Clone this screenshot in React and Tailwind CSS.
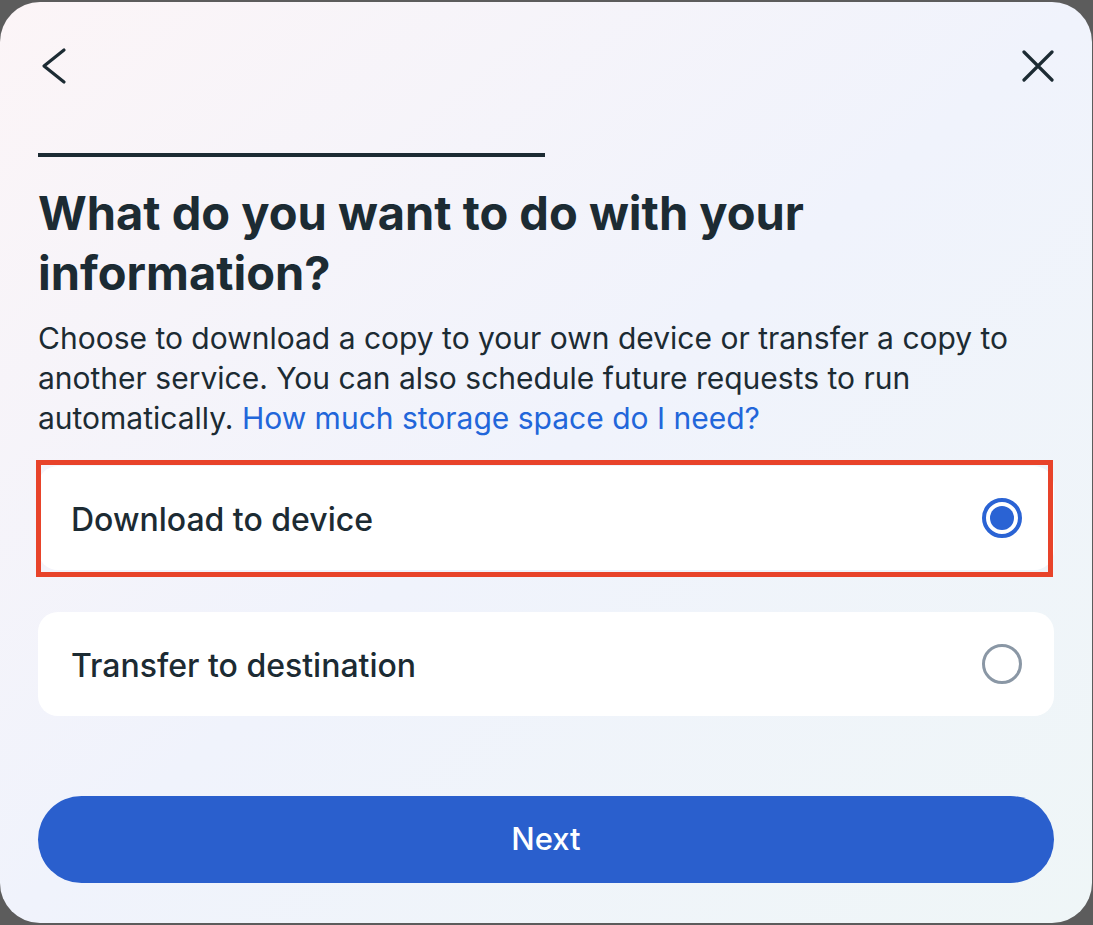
import React, { useState } from 'react';

const font = { fontFamily: 'Inter, "Noto Sans", sans-serif' };

const Radio = ({ checked }) =>
  checked ? (
    <div className="w-[40px] h-[40px] rounded-full border-[4px] border-[#2a63d4] flex items-center justify-center">
      <div className="w-[24px] h-[24px] rounded-full bg-[#2a63d4]"></div>
    </div>
  ) : (
    <div className="w-[40px] h-[40px] rounded-full border-[3px] border-[#8a97a5]"></div>
  );

const App = () => {
  const [choice, setChoice] = useState('download');

  return (
    <div className="w-[1093px] h-[925px] bg-[#5c5c5c] pt-[2px]" style={font}>
      <div className="w-[1092px] h-[921px] rounded-[40px] bg-linear-to-br from-[#fcf5f7] via-[#f0f3fc] to-[#eff6f7] px-[38px] text-[#1c2b33]">
        <div className="pt-[44px] h-[86px] flex items-start justify-between">
          <svg width="32" height="40" viewBox="0 0 32 40" fill="none" stroke="#1c2b33" strokeWidth="3.2" strokeLinecap="round" strokeLinejoin="round">
            <path d="M26 4 L6 20 L26 36" />
          </svg>
          <svg width="32" height="40" viewBox="0 0 32 40" fill="none" stroke="#1c2b33" strokeWidth="3.2" strokeLinecap="round">
            <path d="M2 6 L30 34 M30 6 L2 34" />
          </svg>
        </div>

        <div className="mt-[65px] h-[4px] w-[507px] bg-[#1c2b33]"></div>

        <h1 className="mt-[26px] w-[880px] text-[47px] leading-[60px] font-bold">
          What do you want to do with your information?
        </h1>

        <p className="mt-[15px] text-[30px] leading-[40px]">
          Choose to download a copy to your own device or transfer a copy to another service. You can also schedule future requests to run automatically.{' '}
          <a href="#" className="text-[#2266da]">How much storage space do I need?</a>
        </p>

        <div className="mt-[28px] flex flex-col gap-[42px]">
          <div className="relative">
            <button
              onClick={() => setChoice('download')}
              className="w-full h-[104px] rounded-[20px] bg-white flex items-center justify-between pl-[33px] pr-[32px] text-left"
            >
              <span className="text-[32px] font-medium pt-[4px]">Download to device</span>
              <Radio checked={choice === 'download'} />
            </button>
            <div className="absolute left-[-2px] top-[-6px] w-[1017px] h-[117px] border-[5px] border-[#e8432a] pointer-events-none"></div>
          </div>
          <button
            onClick={() => setChoice('transfer')}
            className="w-full h-[104px] rounded-[20px] bg-white flex items-center justify-between pl-[33px] pr-[32px] text-left"
          >
            <span className="text-[32px] font-medium pt-[4px]">Transfer to destination</span>
            <Radio checked={choice === 'transfer'} />
          </button>
        </div>

        <button className="mt-[80px] w-full h-[87px] rounded-full bg-[#2a5fcd] text-white text-[31px] font-medium">
          Next
        </button>
      </div>
    </div>
  );
};

export default App;
